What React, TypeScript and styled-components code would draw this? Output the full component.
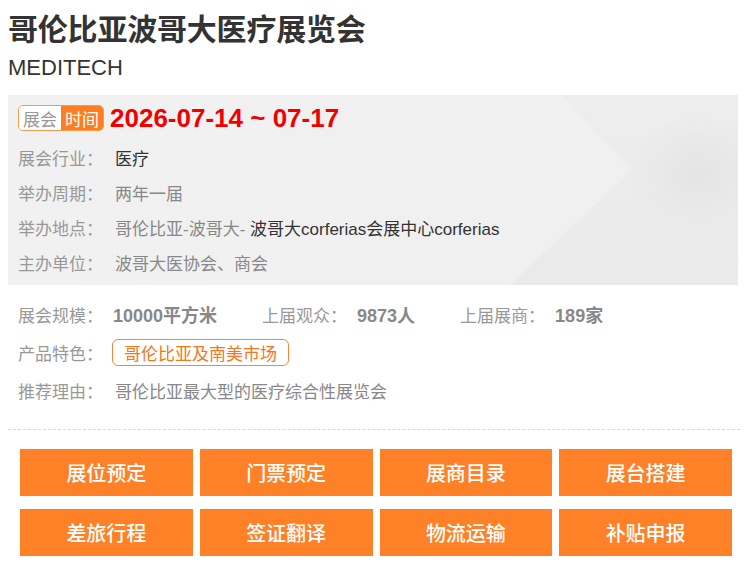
import React from "react";
import styled, { createGlobalStyle } from "styled-components";

const Global = createGlobalStyle`
  html, body { margin: 0; padding: 0; background: #fff; }
  body {
    font-family: "Liberation Sans", "Noto Sans CJK SC", sans-serif;
    color: #333;
  }
`;

const Page = styled.div`
  width: 750px;
  box-sizing: border-box;
  padding: 10px 10px 0 8px;
`;

const Title = styled.h1`
  margin: 0;
  font-size: 30px;
  line-height: 40px;
  font-weight: 700;
  color: #333;
  letter-spacing: -0.2px;
`;

const Subtitle = styled.div`
  margin-top: 3px;
  font-size: 22px;
  line-height: 30px;
  color: #333;
`;

const Panel = styled.div`
  position: relative;
  overflow: hidden;
  margin-top: 12px;
  width: 730px;
  height: 190px;
  box-sizing: border-box;
  padding: 8px 10px 0 10px;
  background: radial-gradient(ellipse 70px 60px at 690px 80px, #e4e4e4 0%, #e9e9e9 60%, rgba(235,235,235,0) 100%),
    linear-gradient(180deg, #ededed, #eaeaea);

  &::before {
    content: "";
    position: absolute;
    inset: 0;
    background: linear-gradient(90deg, #f1f1f1 0%, #f0f0f0 60%, #efefef 100%);
    clip-path: polygon(0 0, 555px 0, 624px 75px, 502px 190px, 0 190px);
  }
`;

const PanelBody = styled.div`
  position: relative;
  z-index: 1;
`;

const DateRow = styled.div`
  display: flex;
  align-items: center;
  height: 30px;
  gap: 6px;
  margin-bottom: 7px;
`;

const Badge = styled.div`
  display: flex;
  border: 1px solid #f59a4f;
  border-radius: 5px;
  overflow: hidden;
  height: 24px;
`;

const BadgeHalf = styled.span<{ $on?: boolean }>`
  display: flex;
  align-items: center;
  padding: 0 4px;
  font-size: 17px;
  background: ${(p) => (p.$on ? "#fb7f22" : "#fff")};
  color: ${(p) => (p.$on ? "#fff" : "#999")};
`;

const DateText = styled.span`
  font-size: 26px;
  font-weight: 700;
  color: #f20000;
  line-height: 30px;
`;

const InfoRow = styled.div`
  display: flex;
  align-items: center;
  height: 35px;
  font-size: 17px;
  white-space: nowrap;
`;

const Label = styled.span`
  width: 97px;
  flex: none;
  color: #999;
`;

const Value = styled.span<{ $dark?: boolean }>`
  color: ${(p) => (p.$dark ? "#333" : "#888")};
`;

const Details = styled.div`
  margin-top: 10px;
  padding-left: 10px;
`;

const DetailRow = styled.div`
  display: flex;
  align-items: center;
  height: 38px;
  font-size: 17px;
  white-space: nowrap;
`;

const Stat = styled.div`
  display: flex;
  align-items: center;
  margin-right: 45px;
`;

const StatLabel = styled.span`
  color: #999;
  margin-right: 10px;
`;

const StatValue = styled.span`
  color: #888;
  font-weight: 700;
  font-size: 18px;
`;

const Tag = styled.span`
  display: inline-flex;
  align-items: center;
  height: 25px;
  padding: 0 11px;
  margin-left: -3px;
  border: 1px solid #f3883a;
  border-radius: 6px;
  color: #f2771d;
  font-size: 17px;
`;

const Divider = styled.div`
  margin-top: 20px;
  width: 732px;
  border-top: 1px dashed #d8d8d8;
`;

const Buttons = styled.div`
  margin: 19px 0 0 12px;
  width: 712px;
  display: grid;
  grid-template-columns: repeat(4, 1fr);
  column-gap: 7px;
  row-gap: 13px;
`;

const ActionButton = styled.button`
  height: 47px;
  border: none;
  background: #fe8127;
  color: #fff;
  font-family: "Noto Sans CJK SC", sans-serif;
  font-size: 20px;
  font-weight: 500;
  cursor: pointer;
  padding: 0;
`;

const actions = [
  "展位预定",
  "门票预定",
  "展商目录",
  "展台搭建",
  "差旅行程",
  "签证翻译",
  "物流运输",
  "补贴申报",
];

export default function App() {
  return (
    <>
      <Global />
      <Page>
        <Title>哥伦比亚波哥大医疗展览会</Title>
        <Subtitle>MEDITECH</Subtitle>
        <Panel>
          <PanelBody>
            <DateRow>
              <Badge>
                <BadgeHalf>展会</BadgeHalf>
                <BadgeHalf $on>时间</BadgeHalf>
              </Badge>
              <DateText>2026-07-14 ~ 07-17</DateText>
            </DateRow>
            <InfoRow>
              <Label>展会行业：</Label>
              <Value $dark>医疗</Value>
            </InfoRow>
            <InfoRow>
              <Label>举办周期：</Label>
              <Value>两年一届</Value>
            </InfoRow>
            <InfoRow>
              <Label>举办地点：</Label>
              <Value>哥伦比亚-波哥大-</Value>
              <Value $dark>&nbsp;波哥大corferias会展中心corferias</Value>
            </InfoRow>
            <InfoRow>
              <Label>主办单位：</Label>
              <Value>波哥大医协会、商会</Value>
            </InfoRow>
          </PanelBody>
        </Panel>
        <Details>
          <DetailRow>
            <Stat>
              <StatLabel>展会规模：</StatLabel>
              <StatValue>10000平方米</StatValue>
            </Stat>
            <Stat>
              <StatLabel>上届观众：</StatLabel>
              <StatValue>9873人</StatValue>
            </Stat>
            <Stat>
              <StatLabel>上届展商：</StatLabel>
              <StatValue>189家</StatValue>
            </Stat>
          </DetailRow>
          <DetailRow>
            <Label>产品特色：</Label>
            <Tag>哥伦比亚及南美市场</Tag>
          </DetailRow>
          <DetailRow>
            <Label>推荐理由：</Label>
            <Value>哥伦比亚最大型的医疗综合性展览会</Value>
          </DetailRow>
        </Details>
        <Divider />
        <Buttons>
          {actions.map((a) => (
            <ActionButton key={a}>{a}</ActionButton>
          ))}
        </Buttons>
      </Page>
    </>
  );
}
